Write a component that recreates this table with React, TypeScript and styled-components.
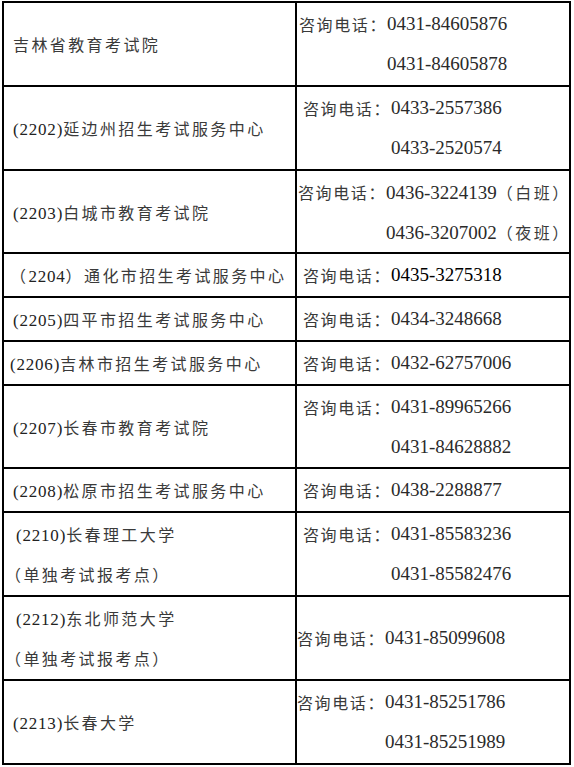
import { Fragment } from "react";
import styled, { createGlobalStyle } from "styled-components";

type NameLine = { text: string; indent: number };
type Office = {
    name: NameLine[];
    phoneIndent: number;
    phones: string[];
    strong?: boolean;
    compact?: boolean;
};

const offices: Office[] = [
    { name: [{ text: "吉林省教育考试院", indent: 9 }], phoneIndent: 2, phones: ["0431-84605876", "0431-84605878"] },
    { name: [{ text: "(2202)延边州招生考试服务中心", indent: 9 }], phoneIndent: 6, phones: ["0433-2557386", "0433-2520574"] },
    { name: [{ text: "(2203)白城市教育考试院", indent: 9 }], phoneIndent: 1, phones: ["0436-3224139（白班）", "0436-3207002（夜班）"], compact: true },
    { name: [{ text: "（2204）通化市招生考试服务中心", indent: 6 }], phoneIndent: 6, phones: ["0435-3275318"], strong: true },
    { name: [{ text: "(2205)四平市招生考试服务中心", indent: 9 }], phoneIndent: 6, phones: ["0434-3248668"] },
    { name: [{ text: "(2206)吉林市招生考试服务中心", indent: 6 }], phoneIndent: 6, phones: ["0432-62757006"] },
    { name: [{ text: "(2207)长春市教育考试院", indent: 9 }], phoneIndent: 6, phones: ["0431-89965266", "0431-84628882"], compact: true },
    { name: [{ text: "(2208)松原市招生考试服务中心", indent: 9 }], phoneIndent: 6, phones: ["0438-2288877"] },
    {
        name: [{ text: "(2210)长春理工大学", indent: 12 }, { text: "（单独考试报考点）", indent: 1 }],
        phoneIndent: 6,
        phones: ["0431-85583236", "0431-85582476"],
    },
    {
        name: [{ text: "(2212)东北师范大学", indent: 12 }, { text: "（单独考试报考点）", indent: 1 }],
        phoneIndent: 0,
        phones: ["0431-85099608"],
    },
    { name: [{ text: "(2213)长春大学", indent: 9 }], phoneIndent: 0, phones: ["0431-85251786", "0431-85251989"] },
];

const GlobalStyle = createGlobalStyle`
    html, body {
        margin: 0;
        padding: 0;
        background: #fff;
    }

    body {
        font-family: "Liberation Serif", "Noto Sans CJK SC", serif;
        color: #222;
        text-spacing-trim: space-all;
    }
`;

const Page = styled.div`
    padding: 1px 0 0 2px;
`;

const Table = styled.div`
    width: 569px;
    box-sizing: border-box;
    border: 2px solid #000;
`;

const Row = styled.div`
    display: grid;
    grid-template-columns: 293px 1fr;

    & + & {
        border-top: 2px solid #000;
    }
`;

const NameCell = styled.div<{ $compact?: boolean }>`
    box-sizing: border-box;
    border-right: 2px solid #000;
    display: flex;
    flex-direction: column;
    justify-content: center;
    padding: 1px 0 ${p => (p.$compact ? 0 : 1)}px;
`;

const PhoneCell = styled.div<{ $indent: number; $compact?: boolean; $strong?: boolean }>`
    display: grid;
    grid-template-columns: max-content max-content;
    align-content: center;
    padding: 1px 0 ${p => (p.$compact ? 0 : 1)}px ${p => p.$indent}px;
    color: ${p => (p.$strong ? "#000" : "#2a2a2a")};
`;

const Line = styled.div<{ $indent?: number }>`
    height: 40px;
    line-height: 40px;
    white-space: nowrap;
    padding-left: ${p => p.$indent ?? 0}px;
`;

const Han = styled.span<{ $spacing: number }>`
    font-family: "Noto Sans CJK SC", sans-serif;
    font-size: 16px;
    letter-spacing: ${p => p.$spacing}px;
    color: #3a3a3a;
`;

const Latin = styled.span`
    font-family: "Liberation Serif", serif;
    font-size: 17px;
    letter-spacing: 0.8px;
`;

const Digits = styled.span`
    font-family: "Liberation Serif", serif;
    font-size: 19px;
`;

const splitRuns = (text: string) => text.match(/[\x00-\x7f]+|[^\x00-\x7f]+/g) ?? [];

const NameText = ({ text }: { text: string }) => (
    <>
        {splitRuns(text).map((run, i) =>
            /^[\x00-\x7f]/.test(run) ? <Latin key={i}>{run}</Latin> : <Han key={i} $spacing={2.4}>{run}</Han>
        )}
    </>
);

const PhoneNumber = ({ value }: { value: string }) => {
    const [, digits, note] = value.match(/^([\d-]+)(.*)$/) ?? ["", value, ""];
    return (
        <Line>
            <Digits>{digits}</Digits>
            {note && <Han $spacing={2.5}>{note}</Han>}
        </Line>
    );
};

export default function App() {
    return (
        <>
            <GlobalStyle/>
            <Page>
                <Table>
                    {offices.map((office, idx) => (
                        <Row key={idx}>
                            <NameCell $compact={office.compact}>
                                {office.name.map((line, i) => (
                                    <Line key={i} $indent={line.indent}>
                                        <NameText text={line.text}/>
                                    </Line>
                                ))}
                            </NameCell>

                            <PhoneCell $indent={office.phoneIndent} $compact={office.compact} $strong={office.strong}>
                                {office.phones.map((phone, i) => (
                                    <Fragment key={i}>
                                        <Line>
                                            {i === 0 && <Han $spacing={1.6}>咨询电话：</Han>}
                                        </Line>
                                        <PhoneNumber value={phone}/>
                                    </Fragment>
                                ))}
                            </PhoneCell>
                        </Row>
                    ))}
                </Table>
            </Page>
        </>
    );
}
